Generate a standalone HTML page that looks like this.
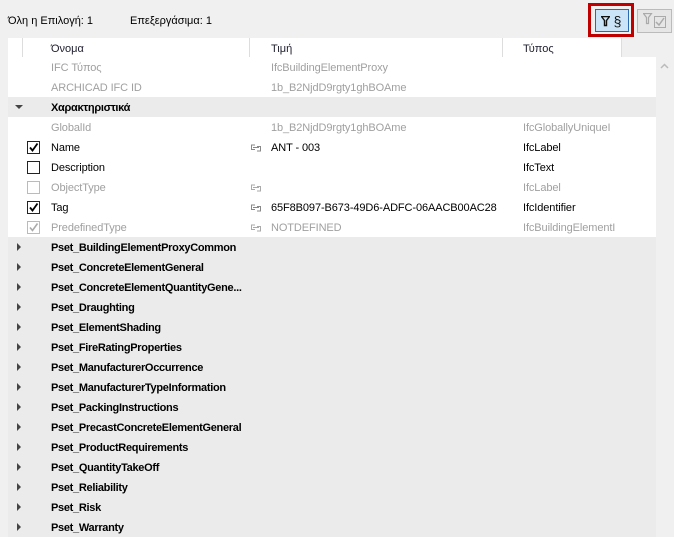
<!DOCTYPE html>
<html><head><meta charset="utf-8"><style>
body{margin:0;width:674px;height:537px;background:#f0f0f0;font-family:"Liberation Sans",sans-serif;font-size:11px;color:#000;position:relative;overflow:hidden}
.a{position:absolute;white-space:nowrap}
.row{position:absolute;left:8px;width:648px;height:20px;background:#fff}
.row span{position:absolute;top:5px;white-space:nowrap;letter-spacing:-0.1px}
.g{color:#a0a0a0}
.sec{background:#ebebeb}
.sec b{position:absolute;left:43px;top:5px;letter-spacing:-0.3px}
.tri{position:absolute;left:9px;top:6px;width:0;height:0;border-top:4px solid transparent;border-bottom:4px solid transparent;border-left:4px solid #444}
.tdown{position:absolute;left:7px;top:8px;border-left:4px solid transparent;border-right:4px solid transparent;border-top:4px solid #444}
.cb{position:absolute;left:19px;top:4px;width:11px;height:11px;border:1px solid #222;background:#fff}
.cb.d{border-color:#bbb}
.cb svg{position:absolute;left:0;top:0}
.lk{position:absolute;left:242px;top:7px}
</style></head><body>
<div class="a" style="left:8px;top:15px">Όλη η Επιλογή: 1</div>
<div class="a" style="left:130px;top:15px">Επεξεργάσιμα: 1</div>
<div class="a" style="left:588px;top:3px;width:40px;height:28px;border:3px solid #c00000"></div>
<div class="a" style="left:595px;top:9px;width:32px;height:21px;border:1px solid #2a6ab0;background:#cce4f7"></div>
<div class="a" style="left:601px;top:13px;font-size:13px;color:#111"><svg width="9" height="11" style="vertical-align:-1px"><path d="M0.5 0.5h8l-3 4v5h-2v-5z" fill="none" stroke="#111" stroke-width="1.4"/></svg> <span style="font-size:14px">§</span></div>
<div class="a" style="left:637px;top:9px;width:33px;height:22px;border:1px solid #bbb;background:#e6e6e6"></div>
<div class="a" style="left:643px;top:13px"><svg width="26" height="15"><path d="M0.5 0.5h8l-3 4v6h-2v-6z" fill="none" stroke="#aaa" stroke-width="1.2"/><rect x="11.5" y="3.5" width="11" height="11" fill="none" stroke="#aaa"/><path d="M13 9l3 3 5-7" fill="none" stroke="#aaa" stroke-width="1.5"/></svg></div>
<div class="a" style="left:8px;top:38px;width:614px;height:19px;background:#fff"></div>
<div class="a" style="left:22px;top:38px;width:1px;height:19px;background:#ddd"></div>
<div class="a" style="left:249px;top:38px;width:1px;height:19px;background:#ddd"></div>
<div class="a" style="left:502px;top:38px;width:1px;height:19px;background:#ddd"></div>
<div class="a" style="left:621px;top:38px;width:1px;height:19px;background:#ddd"></div>
<div class="a" style="left:51px;top:43px;color:#202030">Όνομα</div>
<div class="a" style="left:271px;top:43px;color:#202030">Τιμή</div>
<div class="a" style="left:523px;top:43px;color:#202030">Τύπος</div>
<svg class="a" style="left:660px;top:63px" width="9" height="6"><path d="M1 5l3.5-3.5L8 5" fill="none" stroke="#bbb" stroke-width="1.5"/></svg>

<div class="row" style="top:57px"><span class="g" style="left:43px">IFC Τύπος</span><span class="g" style="left:263px">IfcBuildingElementProxy</span></div>
<div class="row" style="top:77px"><span class="g" style="left:43px">ARCHICAD IFC ID</span><span class="g" style="left:263px">1b_B2NjdD9rgty1ghBOAme</span></div>
<div class="row sec" style="top:97px"><i class="tdown"></i><b>Χαρακτηριστικά</b></div>
<div class="row" style="top:117px"><span class="g" style="left:43px">GlobalId</span><span class="g" style="left:263px">1b_B2NjdD9rgty1ghBOAme</span><span class="g" style="left:515px">IfcGloballyUniqueI</span></div>
<div class="row" style="top:137px"><i class="cb"><svg width="11" height="11"><path d="M2 5.5l2.5 3L9.5 1.5" fill="none" stroke="#000" stroke-width="1.8"/></svg></i><span style="left:43px">Name</span><svg class="lk" width="12" height="8"><path d="M5 1H1.5v4.5H5M7 2.5h3.5V7H7M3 3.5h6" fill="none" stroke="#888"/></svg><span style="left:263px">ANT - 003</span><span style="left:515px">IfcLabel</span></div>
<div class="row" style="top:157px"><i class="cb"></i><span style="left:43px">Description</span><span style="left:515px">IfcText</span></div>
<div class="row" style="top:177px"><i class="cb d"></i><span class="g" style="left:43px">ObjectType</span><svg class="lk" width="12" height="8"><path d="M5 1H1.5v4.5H5M7 2.5h3.5V7H7M3 3.5h6" fill="none" stroke="#aaa"/></svg><span class="g" style="left:515px">IfcLabel</span></div>
<div class="row" style="top:197px"><i class="cb"><svg width="11" height="11"><path d="M2 5.5l2.5 3L9.5 1.5" fill="none" stroke="#000" stroke-width="1.8"/></svg></i><span style="left:43px">Tag</span><svg class="lk" width="12" height="8"><path d="M5 1H1.5v4.5H5M7 2.5h3.5V7H7M3 3.5h6" fill="none" stroke="#888"/></svg><span style="left:263px">65F8B097-B673-49D6-ADFC-06AACB00AC28</span><span style="left:515px">IfcIdentifier</span></div>
<div class="row" style="top:217px"><i class="cb d"><svg width="11" height="11"><path d="M2 5.5l2.5 3L9.5 1.5" fill="none" stroke="#aaa" stroke-width="1.6"/></svg></i><span class="g" style="left:43px">PredefinedType</span><svg class="lk" width="12" height="8"><path d="M5 1H1.5v4.5H5M7 2.5h3.5V7H7M3 3.5h6" fill="none" stroke="#aaa"/></svg><span class="g" style="left:263px">NOTDEFINED</span><span class="g" style="left:515px">IfcBuildingElementI</span></div>

<div class="row sec" style="top:237px"><i class="tri"></i><b>Pset_BuildingElementProxyCommon</b></div>
<div class="row sec" style="top:257px"><i class="tri"></i><b>Pset_ConcreteElementGeneral</b></div>
<div class="row sec" style="top:277px"><i class="tri"></i><b>Pset_ConcreteElementQuantityGene...</b></div>
<div class="row sec" style="top:297px"><i class="tri"></i><b>Pset_Draughting</b></div>
<div class="row sec" style="top:317px"><i class="tri"></i><b>Pset_ElementShading</b></div>
<div class="row sec" style="top:337px"><i class="tri"></i><b>Pset_FireRatingProperties</b></div>
<div class="row sec" style="top:357px"><i class="tri"></i><b>Pset_ManufacturerOccurrence</b></div>
<div class="row sec" style="top:377px"><i class="tri"></i><b>Pset_ManufacturerTypeInformation</b></div>
<div class="row sec" style="top:397px"><i class="tri"></i><b>Pset_PackingInstructions</b></div>
<div class="row sec" style="top:417px"><i class="tri"></i><b>Pset_PrecastConcreteElementGeneral</b></div>
<div class="row sec" style="top:437px"><i class="tri"></i><b>Pset_ProductRequirements</b></div>
<div class="row sec" style="top:457px"><i class="tri"></i><b>Pset_QuantityTakeOff</b></div>
<div class="row sec" style="top:477px"><i class="tri"></i><b>Pset_Reliability</b></div>
<div class="row sec" style="top:497px"><i class="tri"></i><b>Pset_Risk</b></div>
<div class="row sec" style="top:517px"><i class="tri"></i><b>Pset_Warranty</b></div>
</body></html>
